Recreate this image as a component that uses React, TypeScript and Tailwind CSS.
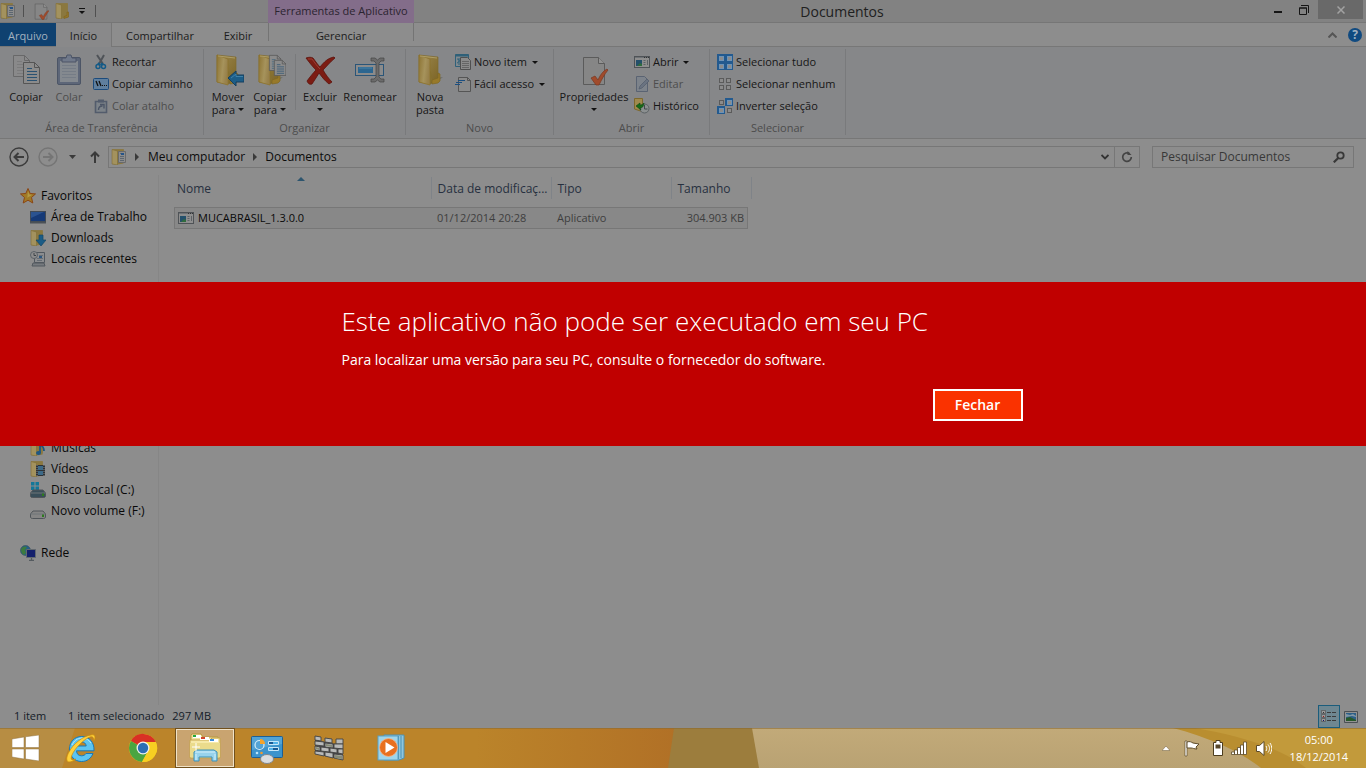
import type { ReactNode } from "react";

type IconProps = { className?: string };

/* ---------- large ribbon icons (32x32) ---------- */

const Page = ({ x, y, lines }: { x: number; y: number; lines: string }) => (
  <g transform={`translate(${x} ${y})`}>
    <path d="M.5.5h11l5 5v16h-16z" fill="#8b8b8b" stroke="#555" />
    <path d="M11.5.5v5h5" fill="none" stroke="#555" />
    <path d="M4 6.500h5M4 9.500h10M4 12.500h10M4 15.500h10M4 18.500h10" stroke={lines} />
  </g>
);

const CopyIcon = () => (
  <svg width="32" height="32" viewBox="0 0 32 32">
    <g opacity="0.6"><Page x={3} y={1} lines="#747474" /></g>
    <Page x={13} y={8} lines="#2a5272" />
  </svg>
);

const PasteIcon = () => (
  <svg width="32" height="32" viewBox="0 0 32 32">
    <rect x="4.500" y="3.500" width="23" height="27" rx="1.500" fill="#5d6678" stroke="#4c5566" />
    <rect x="7" y="7" width="18" height="21" fill="#84898f" />
    <path d="M9 11.500h14M9 14.500h14M9 17.500h14M9 20.500h14M9 23.500h14" stroke="#757c86" />
    <path d="M9 8V4h4l1-3h4l1 3h4v4z" fill="#70798a" stroke="#4c5566" />
  </svg>
);

const FolderShape = () => (
  <>
    <defs>
      <linearGradient id="folderBack" x2="1" y2="1"><stop offset="0" stopColor="#9c884e" /><stop offset="1" stopColor="#7c6425" /></linearGradient>
      <linearGradient id="folderFlap" x2="1" y2="0.300"><stop offset="0" stopColor="#8d7434" /><stop offset="0.600" stopColor="#a6935c" /><stop offset="1" stopColor="#97804a" /></linearGradient>
    </defs>
    <path d="M20 24l9-1-8 6z" fill="#55554f" opacity="0.500" />
    <path d="M5 1l19 2v23l-8 4L5 28z" fill="url(#folderBack)" stroke="#7f6a2f" strokeWidth="0.700" />
    <path d="M5 1l11 4v26L5 28z" fill="url(#folderFlap)" stroke="#8d742f" strokeWidth="0.800" />
    <path d="M6 2l17 2" stroke="#b5a672" strokeWidth="0.800" />
    <path d="M16 17c2 2 2 6 2 10l-2 3z" fill="#86702f" />
    <path d="M24 19l2 1v7l-2 2-6 1v-4l6-2z" fill="#97792a" stroke="#806722" strokeWidth="0.700" />
  </>
);

const NewFolderIcon = () => (
  <svg width="32" height="32" viewBox="0 0 32 32"><FolderShape /></svg>
);

const MoveToIcon = () => (
  <svg width="32" height="32" viewBox="0 0 32 32">
    <FolderShape />
    <path d="M16 24l8-7v4h8v7h-8v4z" fill="#1d5d87" stroke="#143f5f" />
    <path d="M19 24l5-4v2.500h7" stroke="#3f81a8" fill="none" />
  </svg>
);

const CopyToIcon = () => (
  <svg width="32" height="32" viewBox="0 0 32 32">
    <FolderShape />
    <g transform="translate(15 1) scale(.72)"><Page x={0} y={0} lines="#39617e" /></g>
    <g transform="translate(20 6) scale(.72)"><Page x={0} y={0} lines="#2a5272" /></g>
  </svg>
);

const DeleteIcon = () => (
  <svg width="32" height="32" viewBox="0 0 32 32">
    <path d="M2 4c3-1 5-1 7 0 3 4 5 7 7 9 4-5 8-9 14-10l1 1c-5 4-8 8-12 12 3 5 6 9 9 12l-3 2c-4-3-7-7-10-11-3 5-5 8-7 11-3 1-4-1-5-3 3-4 6-8 9-11C8 12 5 8 2 4z" fill="#7c1c13" stroke="#5c130d" strokeWidth="0.800" />
    <path d="M4 5h4c3 4 5 7 8 10" stroke="#9a3e35" fill="none" />
  </svg>
);

const RenameIcon = () => (
  <svg width="32" height="32" viewBox="0 0 32 32">
    <rect x="1.500" y="10.500" width="28" height="11" fill="#8b8b8b" stroke="#2a5578" />
    <rect x="4" y="13" width="15" height="6" fill="#2c6690" />
    <path d="M5 14h13" stroke="#4b83a6" />
    <path d="M17 4h4l2.500 2L26 4h4v3h-3l-2 2v14l2 2h3v3h-4l-2.500-2L21 28h-4v-3h3l2-2V9l-2-2h-3z" fill="#6b6b6b" stroke="#454545" strokeWidth="0.700" />
  </svg>
);

const PropertiesIcon = ({ size = 32 }: { size?: number }) => (
  <svg width={size} height={size} viewBox="0 0 32 32">
    <path d="M5.500 3.500h15l6 6v21h-21z" fill="#868686" stroke="#5b5b5b" />
    <path d="M20.500 3.500v6h6" fill="#929292" stroke="#5b5b5b" />
    <path d="M13 24l4-2 3 4c2-5 5-9 9-11l1 1c-4 5-6 9-9 15h-3z" fill="#a04b2c" stroke="#79371f" strokeWidth="0.700" />
  </svg>
);

/* ---------- small icons (16x16) ---------- */

const Svg16 = ({ children, className }: { children: ReactNode; className?: string }) => (
  <svg width="16" height="16" viewBox="0 0 16 16" className={`shrink-0 ${className ?? ""}`}>{children}</svg>
);

const CutIcon = () => (
  <Svg16>
    <path d="M4 1l6 9M11 1L6 10" stroke="#4f5358" strokeWidth="2" />
    <path d="M5 9l2 2M9.500 9l-1.500 2" stroke="#145a87" strokeWidth="2" />
    <circle cx="5" cy="12.500" r="2" fill="none" stroke="#145a87" strokeWidth="1.500" />
    <circle cx="10.500" cy="12.500" r="2" fill="none" stroke="#145a87" strokeWidth="1.500" />
  </Svg16>
);

const CopyPathIcon = () => (
  <Svg16>
    <rect x="0.500" y="2.500" width="15" height="11" rx="1" fill="#5f7f9e" stroke="#1c4b7c" />
    <path d="M3 5l2 5M6 5l2 5" stroke="#111" strokeWidth="1.300" />
    <path d="M9 9.500h1M11 9.500h1M13 9.500h1" stroke="#111" />
  </Svg16>
);

const PasteShortcutIcon = () => (
  <Svg16>
    <path d="M2.500 3.500h11v11h-11z" fill="#7d8389" stroke="#535c6c" strokeWidth="1.600" />
    <path d="M5 1.500h6v3H5z" fill="#535c6c" />
    <path d="M5.500 12c0-3 1.500-4 4-4M7 6.500h4v4" fill="none" stroke="#4c5566" strokeWidth="1.400" />
  </Svg16>
);

const NewItemIcon = () => (
  <Svg16>
    <path d="M.5.5h13v12H.5z" fill="#80898e" stroke="#2f6079" />
    <path d="M.5 1.500h13" stroke="#2f6079" strokeWidth="2" />
    <path d="M2 5c3 0 3 3 0 4M4 4v7" stroke="#2f6079" fill="none" />
    <path d="M5.500 3.500h7l3 3v9h-10z" fill="#8b8b8b" stroke="#505050" />
    <path d="M7 7.500h7M7 9.500h7M7 11.500h7M7 13.500h7" stroke="#666" />
  </Svg16>
);

const EasyAccessIcon = () => (
  <Svg16>
    <path d="M3.500 1.500h9l3 3v11h-12z" fill="#8b8b8b" stroke="#555" />
    <path d="M12.500 1.500v3h3" fill="none" stroke="#555" />
    <path d="M3 4.500h7M1 6.500h6M0 8.500h5" stroke="#1c4f80" strokeWidth="1.200" />
  </Svg16>
);

const AppWindowIcon = () => (
  <Svg16>
    <rect x="0.500" y="2.500" width="15" height="11" fill="#8e8e8e" stroke="#4f5357" />
    <path d="M1 3.500h14" stroke="#6e7276" />
    <path d="M10 3.500h1M12 3.500h1M14 3.500h1" stroke="#333" />
    <rect x="2" y="6" width="6" height="6" fill="#24506b" />
    <path d="M3 12l3-3 2 1v2z" fill="#2f6b3d" />
    <path d="M9.500 6.500h2M9.500 8.500h2M9.500 10.500h2M13.500 6v5" stroke="#5d6267" />
  </Svg16>
);

const EditIcon = () => (
  <Svg16>
    <path d="M2.500.5h8l3 3v12h-11z" fill="#7d838b" stroke="#5a6372" />
    <path d="M5 13l1-3 7-7 2 2-7 7z" fill="#6a7381" stroke="#525c6c" strokeWidth="0.700" />
  </Svg16>
);

const HistoryIcon = () => (
  <Svg16>
    <path d="M.5.500h8v11l-2 1.500-6-2z" fill="#a08a4e" stroke="#7d682c" />
    <circle cx="10.500" cy="10.500" r="4.500" fill="#8b8f90" stroke="#5b6164" />
    <path d="M10.500 7v4h3" stroke="#43484b" fill="none" />
    <path d="M2 8l4-3v2c2 0 3-1 4-2-.5 4-2 5-4 5l1 2z" fill="#176b17" stroke="#0c4a10" strokeWidth="0.600" />
  </Svg16>
);

const Square = ({ x, y, on }: { x: number; y: number; on?: boolean }) => (
  <g transform={`translate(${x} ${y})`}>
    {on && <rect width="8" height="8" fill="#235a8f" />}
    <rect x="2.500" y="2.500" width="4" height="4" fill="#8b8b8b" stroke={on ? "#6f93b5" : "#5b5b5b"} />
  </g>
);

const SelectAllIcon = () => (
  <Svg16><Square x={0} y={0} on /><Square x={8} y={0} on /><Square x={0} y={8} on /><Square x={8} y={8} on /></Svg16>
);
const SelectNoneIcon = () => (
  <Svg16><Square x={0} y={0} /><Square x={7} y={0} /><Square x={0} y={7} /><Square x={7} y={7} /></Svg16>
);
const InvertIcon = () => (
  <Svg16><Square x={0} y={0} /><Square x={8} y={0} on /><Square x={0} y={8} on /><Square x={8} y={8} /></Svg16>
);

const SmallFolder = () => (
  <>
    <path d="M1 .5h11.500v14L7 15.500 1 15z" fill="#8b783f" />
    <path d="M1 .5l5.500 1.500v14L1 15z" fill="#a3925e" stroke="#806d35" strokeWidth="0.600" />
    <path d="M1 .500h11.500v13" stroke="#8a7740" fill="none" strokeWidth="0.800" />
  </>
);

const FolderIcon = () => (
  <Svg16>
    <SmallFolder />
    <path d="M12 9h1.500v5L9 15.500v-2l3-1z" fill="#94782c" stroke="#80621a" strokeWidth="0.600" />
  </Svg16>
);

const DocumentsIcon = () => (
  <Svg16>
    <SmallFolder />
    <path d="M7.500 2.500h7v11h-7z" fill="#8c8c8c" stroke="#6a6a6a" />
    <path d="M9 4.500h1M9 7.500h4M9 9.500h4M9 11.500h4" stroke="#5c6670" />
    <rect x="10" y="4" width="3" height="2" fill="#255488" />
  </Svg16>
);

const StarIcon = () => (
  <Svg16>
    <path d="M8 .5l2.200 5 5.300.400-4 3.600 1.300 5.500L8 12.200 3.200 15l1.300-5.500-4-3.600 5.300-.400z" fill="#a07a26" stroke="#8b4615" />
    <path d="M8 3l1.300 3.500 3 .300-5 3z" fill="#b59a45" />
  </Svg16>
);

const DesktopIcon = () => (
  <Svg16>
    <rect x="0.500" y="2.500" width="15" height="10" fill="#163a77" stroke="#414a55" />
    <path d="M1 3h13L1 9z" fill="#2b5390" />
    <path d="M0 13.500h16" stroke="#4b5157" strokeWidth="2" />
  </Svg16>
);

const DownloadsIcon = () => (
  <Svg16>
    <SmallFolder />
    <path d="M9 5h4v5h3l-5 6-5-6h3z" fill="#1b5c86" stroke="#164767" strokeWidth="0.700" />
  </Svg16>
);

const RecentIcon = () => (
  <Svg16>
    <path d="M4.500 1.500h10v10h-10z" fill="#8b8d8f" stroke="#52585e" />
    <path d="M3 12l-1 3h13l-1-3z" fill="#767a7e" stroke="#52585e" />
    <path d="M9 4.500h4M7 7.500h6M7 9.500h5" stroke="#666d74" />
    <rect x="9" y="5" width="3" height="2" fill="#2c5780" />
    <circle cx="4" cy="4" r="3.500" fill="#8d8d8d" stroke="#5b6268" />
    <path d="M4 2v2.500h2" fill="none" stroke="#3d4348" />
  </Svg16>
);

const MusicIcon = () => (
  <Svg16>
    <SmallFolder />
    <path d="M10 13V5c3 1 4 3 4 6" fill="none" stroke="#1d5784" strokeWidth="1.800" />
    <ellipse cx="8.500" cy="13" rx="2.500" ry="2" fill="#1d5784" />
  </Svg16>
);

const VideoIcon = () => (
  <Svg16>
    <SmallFolder />
    <path d="M6 4h9v11H6z" fill="#2d3237" />
    <path d="M8 5h5v4H8zM8 10h5v4H8z" fill="#3c6987" />
    <path d="M7 4v11M14 4v11" stroke="#858585" strokeDasharray="1 1" />
  </Svg16>
);

const Disk = ({ win }: { win?: boolean }) => (
  <Svg16>
    {win && <path d="M1 0h3.500v3.500H1zM5.500 0H9v3.500H5.500zM1 4.500h3.500V8H1zM5.500 4.500H9V8H5.500z" fill="#127799" />}
    <path d="M3 8h10l2.500 3v3c0 1-1 1.500-2 1.500h-11c-1 0-2-.500-2-1.500v-3z" fill={win ? "#394e59" : "#858585"} stroke="#50555a" />
    <path d="M.5 11h15" stroke="#6e7478" />
    <rect x="12" y="11.500" width="2" height="2.500" fill="#2d7a1e" />
  </Svg16>
);

const NetworkIcon = () => (
  <Svg16>
    <circle cx="5.500" cy="5.500" r="5" fill="#24608a" stroke="#354e5d" strokeWidth="0.600" />
    <path d="M1 4c2-3 4-3 6-2L5 5l1 3-2 2C2 9 1 7 1 4z" fill="#3c7a3e" />
    <path d="M6.500 4.500h9v8h-9z" fill="#14206c" stroke="#62696f" />
    <path d="M9 15.500h5M11.500 13v2" stroke="#555b60" strokeWidth="1.300" />
  </Svg16>
);

const Caret = ({ className = "text-[#111]" }: IconProps) => (
  <svg width="6" height="3" viewBox="0 0 6 3" className={`shrink-0 ${className}`}><path d="M0 0h6L3 3z" fill="currentColor" /></svg>
);

const CrumbArrow = () => (
  <svg width="4" height="8" viewBox="0 0 4 8" className="shrink-0"><path d="M0 0l4 4-4 4z" fill="#3a3a3a" /></svg>
);

/* ---------- taskbar icons ---------- */

const StartIcon = () => (
  <svg width="28" height="26" viewBox="0 0 28 26">
    <path d="M0 4l12-2v10.500H0zM13.500 1.800L27 0v12.500H13.500zM0 14h12v10L0 22zM13.500 14H27v12l-13.500-2z" fill="#fff" stroke="#8d7040" strokeWidth="0.500" />
  </svg>
);

const IeIcon = () => (
  <svg width="32" height="32" viewBox="0 0 32 32">
    <path d="M16.500 4.500C9.500 4.500 4.500 10 4.500 17s5 12.500 12 12.500c5.500 0 9.500-3 11.500-8h-7c-1 1.500-2.500 2.300-4.500 2.300-3 0-4.800-1.800-5-5H29C29.500 10.500 24.500 4.500 16.500 4.500zM11.700 14c.6-2.600 2.300-4 4.900-4s4.300 1.400 4.600 4z" fill="#5cc4f1" stroke="#1979b8" strokeWidth="1" />
    <path d="M7 13c2-4 5-7 10-7 4 0 7 2 9 5" stroke="#b6e9fc" fill="none" />
    <path d="M29 9c2-4 1-7-3-6C18 4 8 12 4 20c-3 5-3 10 0 10 2 0 5-1 7-3-4 2-6 1-4-4C10 16 19 7 25 5c3-1 4 1 4 4z" fill="#ffd13b" stroke="#c98b0b" strokeWidth="0.700" />
  </svg>
);

const ChromeIcon = () => (
  <svg width="30" height="30" viewBox="0 0 30 30">
    <circle cx="15" cy="15" r="14" fill="#f5c518" />
    <path d="M15 15L2.900 8A14 14 0 0 1 27.800 9H15z" fill="#d93025" />
    <path d="M15 15L2.900 8A14 14 0 0 0 14 29l6-11z" fill="#4aa541" />
    <path d="M15 9h12.800A14 14 0 0 1 14 29l6-11z" fill="#f7cf22" />
    <circle cx="15" cy="15" r="6.500" fill="#f1f1f1" />
    <circle cx="15" cy="15" r="5.200" fill="#2d6fb5" />
  </svg>
);

const ExplorerIcon = () => (
  <svg width="34" height="32" viewBox="0 0 34 32">
    <path d="M3 3l1-1h9l2 3h15v20H3z" fill="#f0e3a0" stroke="#b7973f" />
    <rect x="5" y="3" width="8" height="3" fill="#fff" /><rect x="5" y="3" width="3" height="2" fill="#22a63b" />
    <path d="M2 8h20l2-2h8v20H2z" fill="#f6e9a8" stroke="#c5a54c" />
    <rect x="12" y="5" width="9" height="3" fill="#fff" /><rect x="13" y="5" width="4" height="2" fill="#d3452a" />
    <rect x="21" y="7" width="9" height="3" fill="#fff" /><rect x="22" y="7" width="4" height="2" fill="#3b8bd8" />
    <path d="M2 11h30v14H2z" fill="#eadb8c" />
    <path d="M6 29V20l3-2h17l3 2v9h-5v-4H11v4z" fill="#98d3ec" stroke="#3d91b8" />
    <path d="M7 20h20M8 22v6M27 22v6" stroke="#d3f0fa" />
    <path d="M8 11v8M4 15h8" stroke="#fff" />
  </svg>
);

const ControlPanelIcon = () => (
  <svg width="32" height="32" viewBox="0 0 32 32">
    <rect x="0.500" y="4.500" width="31" height="21" rx="1" fill="#3b93cc" stroke="#1d5f94" />
    <path d="M1 5h30v7L1 18z" fill="#62addb" opacity="0.600" />
    <circle cx="8.500" cy="13" r="4.500" fill="none" stroke="#d7eefa" strokeWidth="1.200" />
    <path d="M9 12V7c3 0 5 2 5 5z" fill="#f5a32a" />
    <path d="M17.500 9.500h10v3h-10zM17.500 15.500h10v3h-10z" fill="#195a94" stroke="#c6e7f8" />
    <path d="M22 11h5M18 17h4" stroke="#52b3ea" strokeWidth="2" />
    <circle cx="6" cy="21" r="1.300" fill="#b8e4fa" /><circle cx="10.500" cy="21" r="1.300" fill="#f29b2c" />
    <ellipse cx="16" cy="27" rx="6.500" ry="4.500" fill="#d9dcdf" stroke="#80868c" />
  </svg>
);

const FirewallIcon = () => (
  <svg width="30" height="28" viewBox="0 0 30 28">
    <path d="M1 2l6 1v4l4 1V4l7 1v4l4 1V5l7 0v21L1 20z" fill="#444" />
    <g fill="#b9bab9" stroke="#444" strokeWidth="0.900">
      <path d="M1 2l6 1v4L1 6zM11 4l7 1v4l-7-1zM22 5h7v5h-7z" />
      <path d="M1 7l9 1v4L1 11zM11 9l8 1v4l-8-1zM20 10h9v5l-9-1z" />
      <path d="M1 12l5 1v4l-5-1zM7 13l8 1v4l-8-1zM16 14l7 1v4l-7-1zM24 15h5v5l-5-1z" />
      <path d="M1 17l9 1v4l-9-2zM11 18l8 1v5l-8-2zM20 20l9 1v5l-9-2z" />
    </g>
    <path d="M12 10l6 1v2l-6-1zM2 13l3 1v2l-3-1zM21 21l7 1v3l-7-1z" fill="#868b77" />
  </svg>
);

const PlayerIcon = () => (
  <svg width="28" height="28" viewBox="0 0 28 28">
    <path d="M7 1h20v23l-5 2H7z" fill="#8fc6de" stroke="#4b90b2" />
    <path d="M24 2v22M21.500 2v23" stroke="#4b90b2" />
    <rect x="1" y="2" width="20" height="24" fill="#9ed4ea" stroke="#5aa0c2" />
    <circle cx="11.500" cy="13.500" r="9" fill="#e8701f" stroke="#f6b183" strokeWidth="0.800" />
    <path d="M8.500 8l9 5.500-9 5.500z" fill="#fff" />
  </svg>
);

/* ---------- ribbon pieces ---------- */

type BigProps = { icon: ReactNode; lines: string[]; menu?: boolean; disabled?: boolean; width: string };

const BigButton = ({ icon, lines, menu, disabled, width }: BigProps) => (
  <button type="button" disabled={disabled} className={`flex flex-col items-center ${width} ${disabled ? "text-[#4d4d4d]" : "text-[#161616]"}`}>
    {icon}
    <span className="mt-1 whitespace-nowrap leading-[13px]">{lines[0]}</span>
    {(lines[1] || menu) && (
      <span className="flex h-[13px] items-center gap-[3px] leading-[13px]">
        {lines[1]}
        {menu && <Caret />}
      </span>
    )}
  </button>
);

type SmallProps = { icon: ReactNode; label: string; menu?: boolean; disabled?: boolean };

const SmallButton = ({ icon, label, menu, disabled }: SmallProps) => (
  <button type="button" disabled={disabled} className={`flex h-[22px] items-center gap-[3px] whitespace-nowrap ${disabled ? "text-[#4d4d4d]" : "text-[#161616]"}`}>
    {icon}
    <span>{label}</span>
    {menu && <Caret className="ml-[2px] text-[#111]" />}
  </button>
);

const Group = ({ title, width, children }: { title: string; width: string; children: ReactNode }) => (
  <section className={`mt-[2px] mb-[3px] flex shrink-0 flex-col border-r border-[#797a7c] ${width}`}>
    <div className="flex flex-1 items-start">{children}</div>
    <h2 className="text-center leading-[14px] text-[#4c4c4c]">{title}</h2>
  </section>
);

const Ribbon = () => (
  <div className="flex h-[92px] border-b border-[#777] bg-[#868789] text-[11px]">
    <Group title="Área de Transferência" width="w-[204px]">
      <div className="flex pt-[5px]">
        <BigButton icon={<CopyIcon />} lines={["Copiar"]} width="w-[52px]" />
        <BigButton icon={<PasteIcon />} lines={["Colar"]} disabled width="w-[34px]" />
      </div>
      <div className="flex flex-col pt-[2px] pl-[7px]">
        <SmallButton icon={<CutIcon />} label="Recortar" />
        <SmallButton icon={<CopyPathIcon />} label="Copiar caminho" />
        <SmallButton icon={<PasteShortcutIcon />} label="Colar atalho" disabled />
      </div>
    </Group>
    <Group title="Organizar" width="w-[202px]">
      <div className="flex pt-[5px] pl-[3px]">
        <BigButton icon={<MoveToIcon />} lines={["Mover", "para"]} menu width="w-[42px]" />
        <BigButton icon={<CopyToIcon />} lines={["Copiar", "para"]} menu width="w-[42px]" />
        <div className="mx-1 h-[56px] border-r border-[#797a7c]" />
        <BigButton icon={<DeleteIcon />} lines={["Excluir"]} menu width="w-[40px]" />
        <BigButton icon={<RenameIcon />} lines={["Renomear"]} width="w-[60px]" />
      </div>
    </Group>
    <Group title="Novo" width="w-[148px]">
      <div className="pt-[5px] pl-[3px]">
        <BigButton icon={<NewFolderIcon />} lines={["Nova", "pasta"]} width="w-[42px]" />
      </div>
      <div className="flex flex-col pt-[2px] pl-1">
        <SmallButton icon={<NewItemIcon />} label="Novo item" menu />
        <SmallButton icon={<EasyAccessIcon />} label="Fácil acesso" menu />
      </div>
    </Group>
    <Group title="Abrir" width="w-[156px]">
      <div className="pt-[5px] pl-[3px]">
        <BigButton icon={<PropertiesIcon />} lines={["Propriedades"]} menu width="w-[74px]" />
      </div>
      <div className="flex flex-col pt-[2px] pl-[3px]">
        <SmallButton icon={<AppWindowIcon />} label="Abrir" menu />
        <SmallButton icon={<EditIcon />} label="Editar" disabled />
        <SmallButton icon={<HistoryIcon />} label="Histórico" />
      </div>
    </Group>
    <Group title="Selecionar" width="w-[136px]">
      <div className="flex flex-col pt-[2px] pl-[7px]">
        <SmallButton icon={<SelectAllIcon />} label="Selecionar tudo" />
        <SmallButton icon={<SelectNoneIcon />} label="Selecionar nenhum" />
        <SmallButton icon={<InvertIcon />} label="Inverter seleção" />
      </div>
    </Group>
  </div>
);

const TitleBar = () => (
  <header className="flex h-[23px] items-start border-b border-[#767676] bg-[#828282] text-[11px]">
    <div className="flex h-[22px] w-[268px] shrink-0 items-center">
      <DocumentsIcon />
      <span className="ml-[7px] h-3 w-px bg-[#505050]" />
      <button type="button" aria-label="Propriedades" className="ml-2"><PropertiesIcon size={18} /></button>
      <button type="button" aria-label="Nova pasta" className="ml-[5px]"><FolderIcon /></button>
      <button type="button" aria-label="Personalizar" className="ml-2 flex flex-col items-center gap-[2px]">
        <span className="h-px w-[6px] bg-[#111]" />
        <Caret />
      </button>
      <span className="ml-[10px] h-3 w-px bg-[#505050]" />
    </div>
    <div className="h-[23px] w-[146px] shrink-0 bg-[#836d8a] text-center leading-[21px] whitespace-nowrap text-[#2b2430]">Ferramentas de Aplicativo</div>
    <h1 className="flex-1 pl-1 text-center text-sm leading-[23px] text-[#202020]">Documentos</h1>
    <div className="flex h-[19px] items-center">
      <button type="button" aria-label="Minimizar" className="flex h-[19px] w-6 items-center justify-center pt-[5px]"><span className="h-[2px] w-2 bg-[#151515]" /></button>
      <button type="button" aria-label="Restaurar" className="flex h-[19px] w-7 items-center justify-center">
        <svg width="10" height="10" viewBox="0 0 10 10" fill="none" stroke="#151515"><path d="M.5 3h7v6.500h-7zM0 3h8" /><path d="M2 .5h7.500V8" /></svg>
      </button>
      <button type="button" aria-label="Fechar janela" className="mr-[3px] flex h-[19px] w-[45px] items-center justify-center bg-[#696969]">
        <svg width="8" height="8" viewBox="0 0 8 8" stroke="#a2a2a2" strokeWidth="1.500"><path d="M.5.5l7 7M7.500.5l-7 7" /></svg>
      </button>
    </div>
  </header>
);

const Tabs = () => (
  <nav className="flex h-6 shrink-0 bg-[#8d8d8d] text-[11px] leading-[25px] text-[#1c1c1c] shadow-[inset_0_-1px_0_#777]">
    <button type="button" className="h-[23px] w-14 bg-[#0f4170] text-[#a3b1bf]">Arquivo</button>
    <button type="button" className="h-6 w-14 border-r border-[#777] bg-[#89898a]">Início</button>
    <button type="button" className="w-24">Compartilhar</button>
    <button type="button" className="w-[60px]">Exibir</button>
    <button type="button" className="h-[18px] w-[146px] border-x border-[#747474] leading-[25px]">Gerenciar</button>
    <div className="ml-auto flex items-center gap-[11px] pr-1">
      <button type="button" aria-label="Minimizar a faixa de opções">
        <svg width="9" height="6" viewBox="0 0 9 6" fill="none" stroke="#555" strokeWidth="2"><path d="M.5 5.500l4-4 4 4" /></svg>
      </button>
      <button type="button" aria-label="Ajuda" className="h-[14px] w-[14px] rounded-full bg-[#104a80] text-center text-xs leading-[14px] font-bold text-[#9fb0c0]">?</button>
    </div>
  </nav>
);

const AddressBar = () => (
  <div className="flex h-9 shrink-0 items-center pr-3 pl-[9px] text-[#0c0c0c]">
    <button type="button" aria-label="Voltar">
      <svg width="20" height="20" viewBox="0 0 20 20" fill="none" stroke="#3c3c3c"><circle cx="10" cy="10" r="9" strokeWidth="1.400" /><path d="M15 10H6M9.500 6L5.500 10l4 4" strokeWidth="2" /></svg>
    </button>
    <button type="button" aria-label="Avançar" disabled className="ml-[9px]">
      <svg width="20" height="20" viewBox="0 0 20 20" fill="none" stroke="#757575"><circle cx="10" cy="10" r="9" strokeWidth="1.400" /><path d="M5 10h9M10.500 6l4 4-4 4" strokeWidth="2" /></svg>
    </button>
    <button type="button" aria-label="Locais recentes" className="ml-[11px]">
      <svg width="7" height="4" viewBox="0 0 7 4"><path d="M0 0h7L3.500 4z" fill="#3a3a3a" /></svg>
    </button>
    <button type="button" aria-label="Acima" className="ml-[14px]">
      <svg width="10" height="12" viewBox="0 0 10 12" fill="none" stroke="#3a3a3a" strokeWidth="2"><path d="M5 12V2M1 5.500l4-4 4 4" /></svg>
    </button>
    <div className="ml-2 flex h-[22px] flex-1 items-center border border-[#777] pl-[2px]">
      <DocumentsIcon />
      <span className="ml-[8px] flex"><CrumbArrow /></span>
      <a href="#computador" className="ml-[9px]">Meu computador</a>
      <span className="ml-2 flex"><CrumbArrow /></span>
      <a href="#documentos" className="ml-2">Documentos</a>
      <button type="button" aria-label="Locais anteriores" className="mr-[5px] ml-auto">
        <svg width="8" height="6" viewBox="0 0 8 6" fill="none" stroke="#333" strokeWidth="1.800"><path d="M.5 1L4 4.500 7.500 1" /></svg>
      </button>
      <button type="button" aria-label="Atualizar" className="flex h-5 w-[25px] items-center justify-center border-l border-[#777]">
        <svg width="12" height="12" viewBox="0 0 12 12" fill="none" stroke="#444" strokeWidth="1.700"><path d="M8.500 2.600A4.300 4.300 0 1 0 10.300 6" /><path d="M6.500 0v4h4z" fill="#444" stroke="none" /></svg>
      </button>
    </div>
    <div className="ml-3 flex h-[22px] w-[202px] items-center border border-[#777] pr-2 pl-2">
      <input type="search" aria-label="Pesquisar Documentos" placeholder="Pesquisar Documentos" className="min-w-0 flex-1 bg-transparent outline-none placeholder:text-[#383838]" />
      <svg width="12" height="12" viewBox="0 0 12 12" fill="none" stroke="#383838" strokeWidth="1.800"><circle cx="7.500" cy="4.500" r="3.200" /><path d="M5.500 6.800L.8 11.300" strokeWidth="2.200" /></svg>
    </div>
  </div>
);

const favorites = [
  { label: "Área de Trabalho", icon: <DesktopIcon /> },
  { label: "Downloads", icon: <DownloadsIcon /> },
  { label: "Locais recentes", icon: <RecentIcon /> },
];

const drives = [
  { label: "Músicas", icon: <MusicIcon /> },
  { label: "Vídeos", icon: <VideoIcon /> },
  { label: "Disco Local (C:)", icon: <Disk win /> },
  { label: "Novo volume (F:)", icon: <Disk /> },
];

const SideLink = ({ label, icon, root }: { label: string; icon: ReactNode; root?: boolean }) => (
  <a href="#pasta" className={`flex h-[21px] items-center gap-[5px] whitespace-nowrap ${root ? "pl-5" : "pl-[30px]"}`}>
    {icon}
    {label}
  </a>
);

const Sidebar = () => (
  <aside className="w-[159px] shrink-0 border-r border-[#868686] pt-[10px] text-[#080808]">
    <SideLink root label="Favoritos" icon={<StarIcon />} />
    {favorites.map((item) => <SideLink key={item.label} {...item} />)}
    <div className="h-[168px]" />
    {drives.map((item) => <SideLink key={item.label} {...item} />)}
    <div className="h-[21px]" />
    <SideLink root label="Rede" icon={<NetworkIcon />} />
  </aside>
);

const th = "h-[22px] border-r border-[#7f8388] p-0 pt-[2px] text-left font-normal";

const FileList = () => (
  <div className="flex-1 pt-[2px] pl-[15px]">
    <table className="w-[577px] table-fixed border-collapse">
      <thead className="text-[#273040]">
        <tr>
          <th className={`${th} w-[257px] pl-[3px]`}>
            <span className="relative block">
              Nome
              <svg width="8" height="4" viewBox="0 0 8 4" className="absolute -top-1 left-[120px]"><path d="M0 4l4-4 4 4z" fill="#2d556e" /></svg>
            </span>
          </th>
          <th className={`${th} w-[120px] truncate pl-[6px]`}>Data de modificaç...</th>
          <th className={`${th} w-[120px] pl-[6px]`}>Tipo</th>
          <th className={`${th} w-[80px] pl-[6px]`}>Tamanho</th>
        </tr>
      </thead>
      <tbody className="text-[11px] text-[#3e3e3e]">
        <tr>
          <td className="p-0 pt-2">
            <div className="flex h-[22px] items-center gap-1 border-y border-l border-[#777] bg-[#888] pl-[3px] text-[#080808]">
              <AppWindowIcon />
              MUCABRASIL_1.3.0.0
            </div>
          </td>
          <td className="p-0 pt-2"><div className="h-[22px] border-y border-[#777] bg-[#888] pl-[6px] leading-5">01/12/2014 20:28</div></td>
          <td className="p-0 pt-2"><div className="h-[22px] border-y border-[#777] bg-[#888] pl-[6px] leading-5">Aplicativo</div></td>
          <td className="p-0 pt-2"><div className="mr-[3px] h-[22px] border-y border-r border-[#777] bg-[#888] pr-[3px] text-right leading-5">304.903 KB</div></td>
        </tr>
      </tbody>
    </table>
  </div>
);

const StatusBar = () => (
  <footer className="flex h-[23px] shrink-0 items-center pr-2 pl-[14px] text-[11px] text-[#141c28]">
    <span className="w-[54px]">1 item</span>
    <span>1 item selecionado</span>
    <span className="ml-2">297 MB</span>
    <button type="button" aria-label="Detalhes" className="ml-auto flex h-[23px] w-[22px] items-center justify-center border border-[#1b5d7c] bg-[#6f8791]">
      <svg width="16" height="13" viewBox="0 0 16 13"><path d="M.5.500h4v3h-4zM.5 4.500h4v3h-4zM.5 8.500h4v3h-4z" fill="#999" stroke="#555" strokeWidth="0.700" /><path d="M2 2.500h1" stroke="#333" /><path d="M2 6.500h1" stroke="#a11" /><path d="M2 10.500h1" stroke="#116" /><path d="M6 2.500h4M11 2.500h4M6 6.500h4M11 6.500h4M6 10.500h4M11 10.500h4" stroke="#3b3b3b" /></svg>
    </button>
    <button type="button" aria-label="Ícones grandes" className="ml-1">
      <svg width="14" height="12" viewBox="0 0 14 12"><path d="M.5.5h13v11H.5z" fill="#929292" stroke="#4b5055" /><path d="M2 2h10v8H2z" fill="#2d5f87" /><path d="M2 3l4 1 3-1 3 2v1L8 5 2 6z" fill="#8097a6" /><path d="M2 7l4-1 6 3v1H2z" fill="#27592b" /></svg>
    </button>
  </footer>
);

const ErrorDialog = () => (
  <div role="alertdialog" aria-labelledby="erro-titulo" className="absolute inset-x-0 top-1/2 -translate-y-1/2 bg-[#c00000] text-white">
    <div className="mx-auto flex w-1/2 flex-col pt-[18px] pb-[25px]">
      <h2 id="erro-titulo" className="text-[26px] leading-[42px] font-light whitespace-nowrap">Este aplicativo não pode ser executado em seu PC</h2>
      <p className="mt-2 text-sm leading-5 whitespace-nowrap">Para localizar uma versão para seu PC, consulte o fornecedor do software.</p>
      <button type="button" className="mt-[19px] mr-[2px] h-8 w-[90px] self-end border-2 border-white bg-[#fa3200] text-sm font-semibold">Fechar</button>
    </div>
  </div>
);

const apps = [
  { label: "Internet Explorer", icon: <IeIcon /> },
  { label: "Google Chrome", icon: <ChromeIcon /> },
  { label: "Explorador de Arquivos", icon: <ExplorerIcon />, active: true },
  { label: "Painel de Controle", icon: <ControlPanelIcon /> },
  { label: "Firewall", icon: <FirewallIcon /> },
  { label: "Media Player", icon: <PlayerIcon /> },
];

const Taskbar = () => (
  <div className="relative flex h-10 shrink-0 items-center text-[11px] text-white">
    {/* wallpaper showing through the bar */}
    <svg className="absolute inset-0 h-full w-full" viewBox="0 0 1366 40" preserveAspectRatio="none">
      <defs>
        <linearGradient id="amber"><stop offset="0" stopColor="#bb842a" /><stop offset="0.700" stopColor="#bb842a" /><stop offset="1" stopColor="#b17026" /></linearGradient>
        <linearGradient id="sand" x2="0" y2="1"><stop offset="0" stopColor="#c2aa79" /><stop offset="1" stopColor="#b9a273" /></linearGradient>
      </defs>
      <path d="M0 0h680v40H0z" fill="url(#amber)" />
      <path d="M0 0h75L62 40H0z" fill="#b78d43" />
      <path d="M674 0h80l6 40h-92z" fill="#9c7d3d" />
      <path d="M752 0h614v40H759z" fill="url(#sand)" />
      <path d="M1173 0h193v40h-105c-20-16-50-30-88-40z" fill="#b98e30" />
      <path d="M1195 0h171v40h-60c-25-20-65-32-111-40z" fill="#c29a3b" />
      <path d="M0 .5h1366" stroke="#8d6c33" opacity="0.600" />
    </svg>
    <button type="button" aria-label="Iniciar" className="relative flex h-10 w-[51px] items-center justify-center"><StartIcon /></button>
    <div className="relative flex h-full items-center">
      {apps.map((app) => (
        <button
          key={app.label}
          type="button"
          aria-label={app.label}
          className={`mr-[2px] flex h-10 w-[60px] items-center justify-center ${app.active ? "border border-[#71501d] bg-[#c9a470] shadow-[inset_0_0_0_1px_#f0e2c8]" : ""}`}
        >
          {app.icon}
        </button>
      ))}
    </div>
    <div className="relative ml-auto flex items-center pr-[18px]">
      <svg width="8" height="5" viewBox="0 0 8 5" className="mr-[13px]"><path d="M0 4.500L4 0l4 4.500z" fill="#fff" stroke="#6d5b38" strokeWidth="0.500" /></svg>
      <svg width="18" height="18" viewBox="0 0 18 18" className="mr-3"><path d="M2 2h2v15H2z" fill="#fff" stroke="#5c4a28" strokeWidth="0.700" /><path d="M4 3c3-1 4 0 6 1l6 1-3 3 1 2c-3 0-4-1-6-1H4z" fill="#fff" stroke="#5c4a28" /></svg>
      <svg width="10" height="16" viewBox="0 0 10 16" className="mr-2"><path d="M3 .5h4v2h2.500v13h-9v-13H3z" fill="#fff" stroke="#4d3d1e" /><path d="M2.500 4.500h5v4h-5z" fill="#55452a" /></svg>
      <svg width="17" height="14" viewBox="0 0 17 14" className="mr-2"><path d="M.5 11h3v2.500h-3zM3.500 9h3v4.500h-3zM6.500 6.500h3v7h-3zM9.500 4h3v9.500h-3zM12.500 1h3v12.500h-3z" fill="#fff" stroke="#5c4a28" strokeWidth="0.800" /></svg>
      <svg width="16" height="15" viewBox="0 0 16 15" className="mr-[18px]" fill="none"><path d="M.5 4.500h3L8 .5v14l-4.500-4h-3z" fill="#fff" stroke="#5c4a28" /><path d="M10 5c1 1.500 1 3.500 0 5M12 3.500c2 2.500 2 5.500 0 8M14 2c2.300 3.500 2.300 7.500 0 11" stroke="#fff" /></svg>
      <div className="text-center leading-[17px]">
        <div>05:00</div>
        <div>18/12/2014</div>
      </div>
    </div>
  </div>
);

export default function App() {
  return (
    <div className="flex h-screen flex-col overflow-hidden bg-[#8d8d8d] font-['Open_Sans','Noto_Sans',sans-serif] text-xs">
      <div className="relative flex min-h-0 flex-1 flex-col">
        <TitleBar />
        <Tabs />
        <Ribbon />
        <AddressBar />
        <main className="flex min-h-0 flex-1">
          <Sidebar />
          <FileList />
        </main>
        <StatusBar />
        <ErrorDialog />
      </div>
      <Taskbar />
    </div>
  );
}
